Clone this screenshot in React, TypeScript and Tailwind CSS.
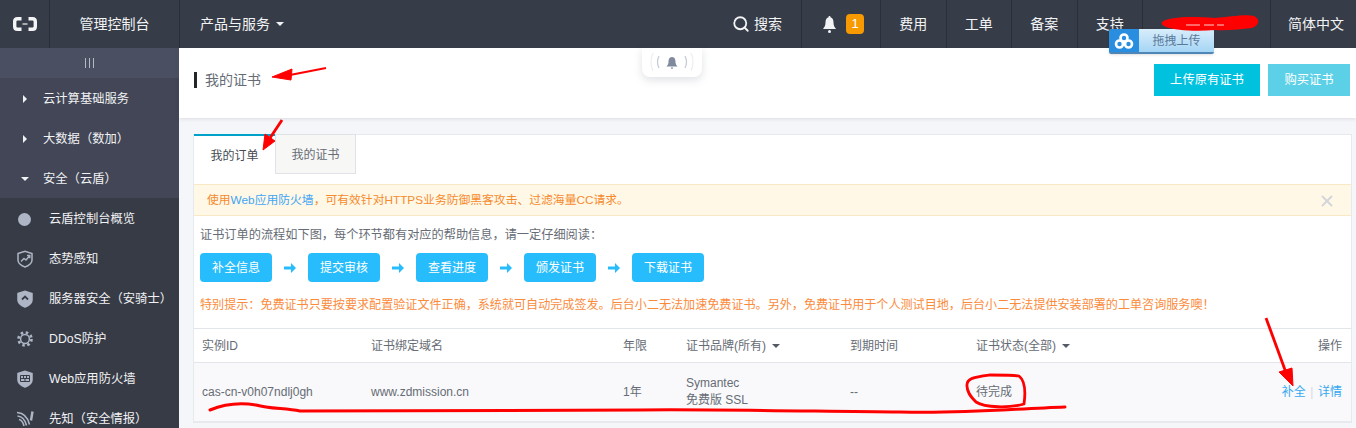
import { Search, X } from "lucide-react";

const font = { fontFamily: '"Liberation Sans", "Noto Sans CJK SC", sans-serif' };

function Caret({ down, className = "" }: { down?: boolean; className?: string }) {
  return (
    <svg width="8" height="8" viewBox="0 0 8 8" className={className} fill="currentColor">
      {down ? <path d="M0 2h8L4 6z" /> : <path d="M2 0l4 4-4 4z" />}
    </svg>
  );
}

function BellGlyph({ className = "" }: { className?: string }) {
  return (
    <svg width="13" height="17" viewBox="0 0 13 17" className={className} fill="currentColor">
      <path d="M6.500 0c.7 0 1 .5 1 1.200C9.800 1.800 10.500 4 10.500 6.500c0 3 1 4.500 2.500 6.500H0c1.500-2 2.500-3.500 2.500-6.500C2.500 4 3.200 1.800 5.500 1.200 5.500.5 5.800 0 6.500 0z" />
      <rect x="5" y="14" width="3" height="3" rx="1.500" />
    </svg>
  );
}

function SideIcon({ kind }: { kind: string }) {
  const shield = "M2 3.500 9 1.200l7 2.300v6.500c0 3.800-3.500 5.800-7 7-3.500-1.200-7-3.200-7-7z";
  if (kind === "gear") {
    return (
      <svg width="18" height="18" viewBox="0 0 18 18" fill="none" stroke="#aeb6c6">
        <circle cx="9" cy="9" r="6.500" strokeWidth="2.600" strokeDasharray="2.500 2.600" />
        <circle cx="9" cy="9" r="4.400" strokeWidth="1.500" />
      </svg>
    );
  }
  if (kind === "wave") {
    return (
      <svg width="18" height="18" viewBox="0 0 18 18" fill="none" stroke="#aeb6c6">
        <path d="M1 2.500c6 .5 10.500 3 12.500 12" strokeWidth="1.600" />
        <path d="M1.500 6c4.500.5 7.500 3 9 9.500" strokeWidth="1.600" />
        <path d="M3 9.500c2.500.5 4 2.500 5 6.500" strokeWidth="1.600" />
        <path d="M16.500 1.500l-1.500 9" strokeWidth="2.400" />
      </svg>
    );
  }
  return (
    <svg width="18" height="18" viewBox="0 0 18 18" fill={kind === "trend" ? "none" : "#aeb6c6"} stroke="#aeb6c6" strokeWidth="1.500">
      <path d={shield} />
      {kind === "trend" && <path d="M5 11.500l3-3 2 1.500 3.500-4M11 5.500h2.800v2.800" fill="none" strokeWidth="1.400" />}
      {kind === "up" && <path d="M6 9.500l3-3 3 3" fill="none" stroke="#373b46" strokeWidth="1.800" />}
      {kind === "wall" && <path d="M4.500 5.500h9v6h-9zM4.500 8.500h9M7.500 5.500v3M10.500 5.500v3M9 8.500v3" fill="none" stroke="#373b46" strokeWidth="1" />}
    </svg>
  );
}

const groups = [
  { label: "云计算基础服务", open: false },
  { label: "大数据（数加）", open: false },
  { label: "安全（云盾）", open: true },
];

const subs = [
  { label: "云盾控制台概览", icon: "dot" },
  { label: "态势感知", icon: "trend" },
  { label: "服务器安全（安骑士）", icon: "up" },
  { label: "DDoS防护", icon: "gear" },
  { label: "Web应用防火墙", icon: "wall" },
  { label: "先知（安全情报）", icon: "wave" },
];

const topLinks = ["费用", "工单", "备案", "支持"];
const steps = ["补全信息", "提交审核", "查看进度", "颁发证书", "下载证书"];
const columns = "grid grid-cols-[169px_252px_63px_164px_126px_1fr_auto] items-center pl-2 pr-[9px]";

function TopBar() {
  return (
    <header className="flex h-12 shrink-0 items-center bg-[#373d48] text-[14px] text-[#f2f3f5]">
      <div className="flex h-full w-[50px] items-center justify-center border-r border-[#2a2f38]">
        <svg width="24" height="14" viewBox="0 0 24 14" fill="none" stroke="#f4f5f6">
          <path d="M8.500 1.700H4.500Q1.700 1.700 1.700 4.500v5q0 2.800 2.800 2.800h4M15.500 1.700h4q2.800 0 2.800 2.800v5q0 2.800-2.800 2.800h-4" strokeWidth="3.400" />
          <path d="M9.500 7h5" strokeWidth="1.200" />
        </svg>
      </div>
      <div className="flex h-full w-[130px] items-center justify-center border-r border-[#2a2f38]">管理控制台</div>
      <div className="flex items-center gap-1.5 pl-5">
        产品与服务
        <Caret down className="text-[#f2f3f5]" />
      </div>
      <div className="ml-auto flex h-full items-center">
        <div className="flex h-full w-[70px] items-center gap-1 border-r border-[#2a2f38]">
          <Search size={18} strokeWidth={2.4} />
          <span>搜索</span>
        </div>
        <div className="flex h-full w-[79px] items-center pl-[21px] border-r border-[#2a2f38]">
          <BellGlyph />
          <span className="ml-[10px] flex h-[20px] w-[18px] items-center justify-center rounded-[4px] bg-[#f79a00] text-[13px] text-white">1</span>
        </div>
        {topLinks.map((link) => (
          <div key={link} className="flex h-full w-[65.500px] items-center justify-center border-r border-[#2a2f38]">
            {link}
          </div>
        ))}
        <div className="h-full w-[128px] border-r border-[#2a2f38]" />
        <div className="flex h-full w-[85px] items-center pl-[17px]">简体中文</div>
      </div>
    </header>
  );
}

function Sidebar() {
  return (
    <aside className="w-[179px] shrink-0 bg-[#373b46] text-[12.300px] text-[#f1f2f4]">
      <div className="flex h-[30px] items-center justify-center gap-[3px] bg-[#4a5062]">
        <span className="h-2.5 w-px bg-[#b4b9c4]" />
        <span className="h-2.5 w-px bg-[#b4b9c4]" />
        <span className="h-2.5 w-px bg-[#b4b9c4]" />
      </div>
      <div className="bg-[#424656]">
        {groups.map((group) => (
          <div key={group.label} className="flex h-10 items-center pt-[2px]">
            <span className="flex w-[43px] justify-center pl-[7px]">
              <Caret down={group.open} />
            </span>
            {group.label}
          </div>
        ))}
      </div>
      <div>
        {subs.map((sub) => (
          <div key={sub.label} className="flex h-10 items-center pt-[2px]">
            <span className="flex w-[49px] justify-center">
              {sub.icon === "dot" ? <span className="h-[13px] w-[13px] rounded-full bg-[#aeb6c6]" /> : <SideIcon kind={sub.icon} />}
            </span>
            {sub.label}
          </div>
        ))}
      </div>
    </aside>
  );
}

function Annotations() {
  return (
    <svg className="pointer-events-none absolute inset-0" width="1356" height="428" viewBox="0 0 1356 428" fill="none">
      <g stroke="#ff0000" fill="#ff0000">
        <path d="M326 68 290 75" strokeWidth="2.200" />
        <path d="M272 77 292 69 291 80z" strokeWidth="1" />
        <path d="M282 120 268 141" strokeWidth="2.800" />
        <path d="M263 150 265 134 275 141z" strokeWidth="1" />
        <path d="M1266 318 1288 378" strokeWidth="2.800" />
        <path d="M1293 386 1279 372 1292 368z" strokeWidth="1" />
      </g>
      <g stroke="#ff0000" strokeLinecap="round" strokeLinejoin="round">
        <path d="M210 410C222 405 238 402 256 405 270 409 285 408 300 411 325 412 440 411 640 410 690 409 800 411 900 412 960 414 1010 409 1065 407" strokeWidth="3" />
        <path d="M967 386C966 378 975 377 990 375 1005 375 1015 375 1019 376 1024 380 1026 390 1024 404 1010 408 985 408 976 402 970 396 967 392 967 386Z" strokeWidth="2.800" />
      </g>
      <path d="M1162 22C1168 17 1190 16 1215 18 1230 17 1245 14 1254 16 1260 19 1260 25 1252 28 1240 29 1228 31 1215 30 1195 32 1175 30 1166 27 1162 25 1161 24 1162 22Z" fill="#ff0000" />
      <path d="M1186 25h14M1204 25h10M1217 25h7" stroke="#ffd0d0" strokeWidth="1" />
    </svg>
  );
}

function Baidu() {
  return (
    <div className="absolute left-[1109px] top-[29px] flex h-[25px] w-[105px] overflow-hidden rounded-[2px] border-b-2 border-[#4f86b8] shadow-sm">
      <div className="flex w-[30px] items-center justify-center bg-[#2a8ee0]">
        <svg width="20" height="16" viewBox="0 0 20 16" fill="none" stroke="#ffffff" strokeWidth="2.600">
          <circle cx="10" cy="5" r="3.500" />
          <circle cx="5.500" cy="11" r="3.500" />
          <circle cx="14.500" cy="11" r="3.500" />
        </svg>
      </div>
      <div className="flex flex-1 items-center justify-center bg-gradient-to-b from-[#d8edfb] to-[#a5d5f5] text-[12px] text-[#5b7a99]">拖拽上传</div>
    </div>
  );
}

function Notice() {
  return (
    <div className="absolute left-[642px] top-[48px] h-[29px] w-[60px] rounded-b-lg bg-white shadow-[0_3px_8px_rgba(80,90,110,0.18)]">
      <svg width="60" height="29" viewBox="0 0 60 29" fill="none">
        <path d="M17 8q-3 6 0 12M43 8q3 6 0 12" stroke="#c4c9d2" strokeWidth="1.200" />
        <path d="M11 5q-4 9 0 18M49 5q4 9 0 18" stroke="#eceef2" strokeWidth="1.200" />
        <path d="M30 9c3 0 3.500 3 3.500 5 0 2 .8 3 2 4.500h-11c1.200-1.500 2-2.500 2-4.500 0-2 .5-5 3.500-5z" fill="#7f8a9c" />
        <rect x="29" y="19.500" width="2" height="1.200" fill="#7f8a9c" />
      </svg>
    </div>
  );
}

function OrderCard() {
  return (
    <section className="ml-[14px] mr-[4px] mt-4 border border-t-0 border-[#e6e9ee] bg-white text-[12px] text-[#666c75]">
      <div className="flex h-10 items-stretch bg-white">
        <div className="flex w-[81px] items-center justify-center border-t-2 border-[#00a2ca] pt-[2px] text-[#444a52]">我的订单</div>
        <div className="flex w-[81px] items-center justify-center border border-[#dfe2e6] bg-[#f7f7f5] pt-[2px] text-[#666c75]">我的证书</div>
        <div className="flex-1 border-t border-[#e6e9ee]" />
      </div>
      <div className="mt-[10px] flex h-[32px] items-center justify-between border-y border-[#fbe8c4] bg-[#fff8e6] pl-[13px] pr-[15px] pt-[2px] text-[11.800px] text-[#f58a2e]">
        <span>
          使用<span className="text-[#42a5f5]">Web应用防火墙</span>，可有效针对HTTPS业务防御黑客攻击、过滤海量CC请求。
        </span>
        <X size={18} strokeWidth={2.6} className="text-[#d3d6db]" />
      </div>
      <div className="px-1.5 pt-[12px] text-[12.200px] leading-[14px]">证书订单的流程如下图，每个环节都有对应的帮助信息，请一定仔细阅读：</div>
      <div className="flex items-center gap-[12px] px-1.5 pt-[11px]">
        {steps.map((step, i) => (
          <div key={step} className="contents">
            {i > 0 && (
              <svg width="12" height="10" viewBox="0 0 12 10" fill="#27bdfd">
                <path d="M0 3.500h7V0l5 5-5 5V6.500H0z" />
              </svg>
            )}
            <div className="flex h-[29px] w-[72px] items-center justify-center rounded-[4px] bg-[#27bdfd] text-[12px] text-white">{step}</div>
          </div>
        ))}
      </div>
      <div className="px-1.5 pt-[16px] text-[12.080px] leading-[14px] text-[#fb8b3c]">
        特别提示：免费证书只要按要求配置验证文件正确，系统就可自动完成签发。后台小二无法加速免费证书。另外，免费证书用于个人测试目地，后台小二无法提供安装部署的工单咨询服务噢！
      </div>
      <div className={`${columns} mt-[16px] h-[35px] border-y border-[#e2e6eb]`}>
        <span>实例ID</span>
        <span>证书绑定域名</span>
        <span>年限</span>
        <span className="flex items-center gap-1.5">
          证书品牌(所有)
          <Caret down className="text-[#555b64]" />
        </span>
        <span>到期时间</span>
        <span className="flex items-center gap-1.5">
          证书状态(全部)
          <Caret down className="text-[#555b64]" />
        </span>
        <span>操作</span>
      </div>
      <div className={`${columns} h-[59px] border-b border-[#e6e9ee] bg-[#f9f9fb]`}>
        <span>cas-cn-v0h07ndlj0gh</span>
        <span>www.zdmission.cn</span>
        <span>1年</span>
        <span className="leading-[17px]">
          Symantec
          <br />
          免费版 SSL
        </span>
        <span>--</span>
        <span>待完成</span>
        <span className="text-[#35a8f0]">
          补全<span className="px-[4.500px] text-[#d5d9df]">|</span>详情
        </span>
      </div>
    </section>
  );
}

export default function App() {
  return (
    <div className="relative flex h-[428px] w-[1356px] flex-col overflow-hidden bg-[#f5f6fa]" style={font}>
      <TopBar />
      <div className="flex min-h-0 flex-1">
        <Sidebar />
        <main className="min-w-0 flex-1">
          <div className="flex h-[70px] items-start justify-between bg-white pl-[15px] pr-[6px] shadow-[0_1px_4px_rgba(60,70,90,0.14)]">
            <h1 className="mt-[24px] border-l-[3px] border-[#23262b] pl-2 text-[14px] font-normal leading-[16px] text-[#666c75]">我的证书</h1>
            <div className="mt-[16px] flex gap-2">
              <button className="h-[32px] w-[106px] bg-[#00c1de] text-[12.300px] text-white">上传原有证书</button>
              <button className="h-[32px] w-[82px] bg-[#5bd0e6] text-[12.300px] text-white">购买证书</button>
            </div>
          </div>
          <OrderCard />
        </main>
      </div>
      <Notice />
      <Baidu />
      <Annotations />
    </div>
  );
}
